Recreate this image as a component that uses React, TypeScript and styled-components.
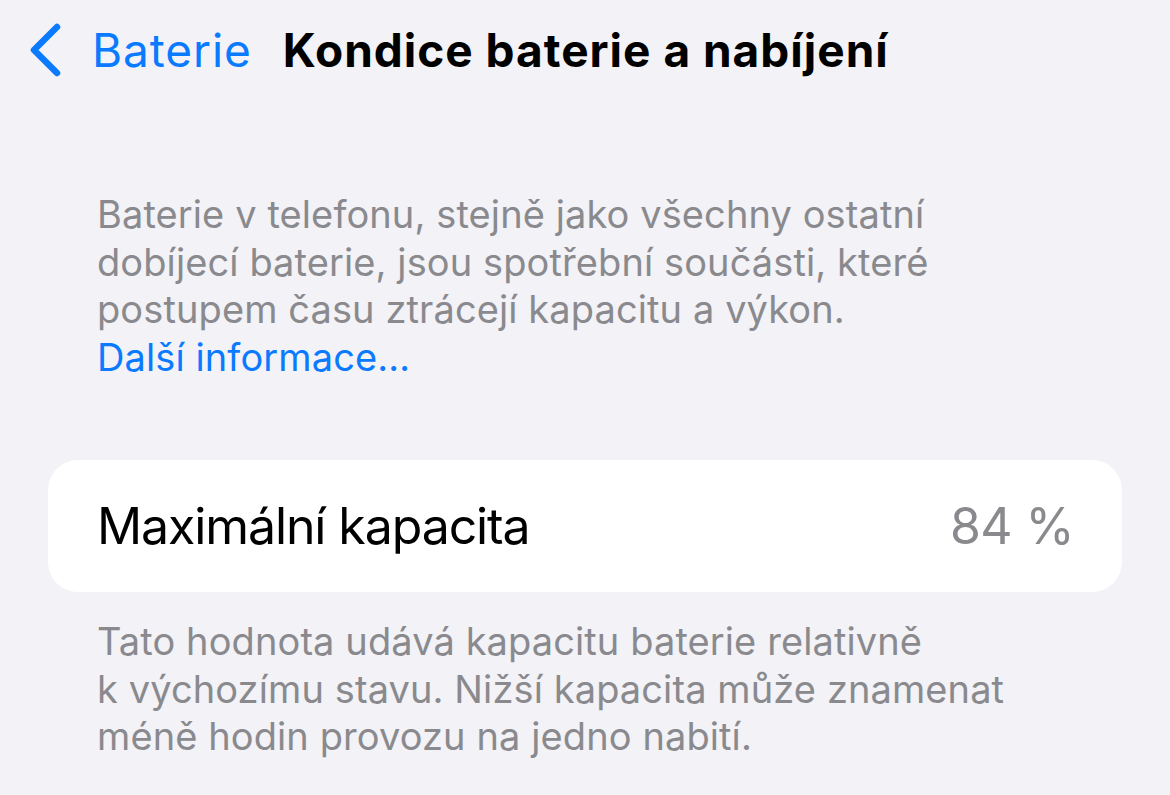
import React from "react";
import styled, { createGlobalStyle } from "styled-components";

const GlobalStyle = createGlobalStyle`
  html, body {
    margin: 0;
    padding: 0;
    background: #f2f2f7;
  }
  body {
    font-family: Inter, "Noto Sans", "Liberation Sans", sans-serif;
    -webkit-font-smoothing: antialiased;
  }
`;

const Page = styled.div`
  width: 1170px;
  height: 795px;
  overflow: hidden;
  background: #f2f2f7;
  display: flex;
  flex-direction: column;
`;

const NavBar = styled.div`
  display: flex;
  align-items: center;
  height: 56px;
  margin-top: 22px;
  padding-left: 28px;
`;

const BackButton = styled.div`
  display: flex;
  align-items: center;
  gap: 30px;
  color: #0a7aff;
  font-size: 46px;
  letter-spacing: 0.9px;
`;

const Title = styled.div`
  margin-left: 31px;
  font-size: 46px;
  font-weight: 700;
  color: #000;
  letter-spacing: 1px;
`;

const Note = styled.p<{ $top: number }>`
  margin: ${(p) => p.$top}px 0 0;
  padding: 0 40px 0 97px;
  font-size: 38px;
  line-height: 47.5px;
  color: #8a8a8e;
  letter-spacing: 0.1px;
  white-space: nowrap;
`;

const Link = styled.span`
  color: #0a7aff;
`;

const Card = styled.div`
  margin: 79px 48px 0;
  height: 132px;
  background: #fff;
  border-radius: 30px;
  display: flex;
  align-items: center;
  justify-content: space-between;
  padding: 0 48px 0 49px;
`;

const Label = styled.span`
  font-size: 50px;
  color: #000;
  letter-spacing: -1.1px;
`;

const Value = styled.span`
  font-size: 50px;
  color: #8a8a8e;
  letter-spacing: -0.6px;
`;

const Chevron = () => (
  <svg width="34" height="54" viewBox="0 0 34 54" fill="none">
    <path
      d="M29 4 L6 27 L29 50"
      stroke="#0a7aff"
      strokeWidth="6.5"
      strokeLinecap="round"
      strokeLinejoin="round"
    />
  </svg>
);

export default function App() {
  return (
    <>
      <GlobalStyle />
      <Page>
        <NavBar>
          <BackButton>
            <Chevron />
            <span>Baterie</span>
          </BackButton>
          <Title>Kondice baterie a nabíjení</Title>
        </NavBar>
        <Note $top={113}>
          Baterie v telefonu, stejně jako všechny ostatní
          <br />
          dobíjecí baterie, jsou spotřební součásti, které
          <br />
          postupem času ztrácejí kapacitu a výkon.
          <br />
          <Link>Další informace…</Link>
        </Note>
        <Card>
          <Label>Maximální kapacita</Label>
          <Value>84 %</Value>
        </Card>
        <Note $top={26}>
          Tato hodnota udává kapacitu baterie relativně
          <br />
          k výchozímu stavu. Nižší kapacita může znamenat
          <br />
          méně hodin provozu na jedno nabití.
        </Note>
      </Page>
    </>
  );
}
